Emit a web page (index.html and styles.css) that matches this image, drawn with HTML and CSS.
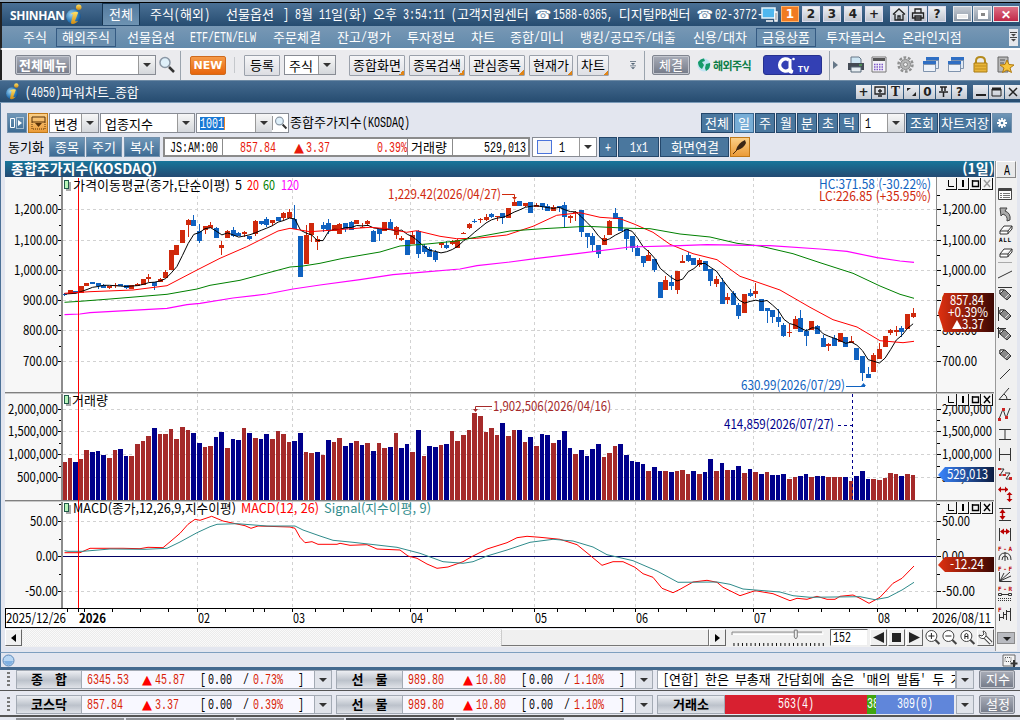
FILE: index.html
```html
<!DOCTYPE html>
<html lang="ko">
<head>
    <meta charset="UTF-8">
    <meta name="viewport" content="width=device-width, initial-scale=1.0">
    <title>(4050)파워차트_종합</title>
    <link rel="stylesheet" href="styles.css">
</head>
<body>
<svg class="defs" width="0" height="0">
    <defs>
        <linearGradient id="gold" x1="0" y1="0" x2="0" y2="1"><stop offset="0" stop-color="#ffe36a"/><stop offset="1" stop-color="#d08a10"/></linearGradient>
        <radialGradient id="ball" cx=".35" cy=".35" r=".8"><stop offset="0" stop-color="#9fd4f2"/><stop offset=".6" stop-color="#2a78b8"/><stop offset="1" stop-color="#0d3c74"/></radialGradient>
    </defs>
    <symbol id="logo" viewBox="0 0 16 20">
        <ellipse cx="7.500" cy="12" rx="7" ry="7" fill="url(#ball)"/>
        <path d="M5 9c3-2 6-2 7-1l-3 8c0 1 1 1 3 0-2 3-6 4-7 2l2-8z" fill="url(#gold)"/>
        <circle cx="12.500" cy="3" r="2.600" fill="url(#gold)"/>
    </symbol>
    <symbol id="glass" viewBox="0 0 18 18">
        <path d="M11 11l5 5" stroke="#333" stroke-width="2.500"/>
        <circle cx="7" cy="6.500" r="5" fill="#dff0fa" stroke="#8a97a5" stroke-width="1.500"/>
    </symbol>
    <symbol id="window" viewBox="0 0 18 18">
        <path d="M4 1h13v4H4z" fill="#2f6fc4"/><path d="M4.500 4.500h12v8h-12z" fill="#dfe9f5" stroke="#7f93ad"/>
        <path d="M1 5h13v4H1z" fill="#2f6fc4"/><path d="M1.500 8.500h12v7h-12z" fill="#eef2f8" stroke="#7f93ad"/>
    </symbol>
    <symbol id="pencil" viewBox="0 0 20 20">
        <path d="M5 6l5 0 6 6-4 4-7-6z" fill="#8a8a8a" stroke="#333"/><path d="M5 6v4l4-4z" fill="#fff" stroke="#333"/><path d="M14 10l-4 4" stroke="#ddd"/>
    </symbol>
    <symbol id="eraser" viewBox="0 0 20 12">
        <path d="M5 7l4-5h8l-4 5zM5 7v3h7.500l4.500-5V2M13 7v3" fill="#fff" stroke="#333"/>
    </symbol>
</svg>

<div class="app">
    <div class="strip"></div>

    <div class="titlebar">
        <b class="brand">SHINHAN</b>
        <svg class="brand-i" width="18" height="21"><use href="#logo"/></svg>
        <span class="tab f">전체</span>
        <span class="f">주식(해외)</span>
        <span class="f">선물옵션</span>
        <span class="f">] 8월 11일(화) 오후 3:54:11 (고객지원센터 ☎ 1588-0365, 디지털PB센터 ☎ 02-3772-</span>
        <svg width="17" height="15" viewBox="0 0 17 15"><path d="M1 1h13v10H1z" fill="#4fb7ee" stroke="#e8f4fb" stroke-width="1.500"/><path d="M5 14h7M14 5h2v9h-2z" stroke="#fff" stroke-width="1.500"/></svg>
        <b class="key on">1</b><b class="key">2</b><b class="key">3</b><b class="key">4</b><b class="key">+</b>
        <span class="key"><svg width="14" height="13" viewBox="0 0 14 13"><path d="M1 6.500L7 1l6 5.500M3 6v6h8V6M6 12V8h2v4" fill="none" stroke="#222" stroke-width="1.300"/></svg></span>
        <span class="key"><svg width="14" height="13" viewBox="0 0 14 13"><path d="M4 5V1h6v4M1.500 5h11v5h-11zM4 8h6v4H4z" fill="none" stroke="#222" stroke-width="1.300"/></svg></span>
        <b class="key">?</b>
        <span class="win"><i class="min"></i></span><span class="win"><i class="max"></i></span><b class="win close">✕</b>
    </div>

    <div class="menubar">
        <span class="f">주식</span>
        <span class="f boxed">해외주식</span>
        <span class="f">선물옵션</span>
        <span class="f">ETF/ETN/ELW</span>
        <span class="f">주문체결</span>
        <span class="f">잔고/평가</span>
        <span class="f">투자정보</span>
        <span class="f">차트</span>
        <span class="f">종합/미니</span>
        <span class="f">뱅킹/공모주/대출</span>
        <span class="f">신용/대차</span>
        <span class="f boxed">금융상품</span>
        <span class="f">투자플러스</span>
        <span class="f">온라인지점</span>
        <span class="more"><svg width="7" height="10" viewBox="0 0 7 10"><path d="M0 0h7v1H0zM1 2h5L3.500 4.500zM0 5h7v1H0zM1 7h5L3.500 9.500z" fill="#444"/></svg></span>
    </div>

    <div class="toolbar">
        <b class="dark f">전체메뉴</b>
        <div class="sel w-search"><i></i></div>
        <svg width="18" height="18"><use href="#glass"/></svg>
        <span class="vline"></span>
        <b class="new">NEW</b>
        <span class="vline short"></span>
        <span class="btn f">등록</span>
        <div class="sel w-stock"><span class="f">주식</span><i></i></div>
        <span class="btn fold f">종합화면</span>
        <span class="btn fold f">종목검색</span>
        <span class="btn fold f">관심종목</span>
        <span class="btn fold f">현재가</span>
        <span class="btn fold f">차트</span>
        <svg width="6" height="9" viewBox="0 0 7 10"><path d="M0 0h7v1H0zM1 2h5L3.500 4.500zM0 5h7v1H0zM1 7h5L3.500 9.500z" fill="#567"/></svg>
        <span class="vline"></span>
        <span class="dark f">체결</span>
        <span class="global"><svg width="14" height="14" viewBox="0 0 14 14"><circle cx="7" cy="7" r="6.500" fill="#bfe3f2"/><path d="M1 4q3-4 6-3.500l1 2.500-3 1 2 3-2 4Q1 9 1 4zM9 6l4-1q1 5-4 8l-1-3z" fill="#159a6a"/></svg><b>해외주식</b></span>
        <span class="tv"><svg width="22" height="17" viewBox="0 0 22 17"><path d="M13 3a6 6 0 1 0 0 10q1 2 3 2" fill="none" stroke="#fff" stroke-width="3.500"/><path d="M14 2v9q0 3 3 4" fill="none" stroke="#fff" stroke-width="3"/><circle cx="17.500" cy="2" r="1.300" fill="#fff"/></svg><b>TV</b></span>
        <span class="vline"></span>
        <svg width="5" height="8" viewBox="0 0 5 8"><path d="M0 0l5 4-5 4z" fill="#678"/></svg>
        <svg width="18" height="18" viewBox="0 0 18 18"><path d="M4 7V1h8l2 2v4" fill="#cfe6f3" stroke="#678"/><path d="M1 7h16v7H1z" fill="#444b55"/><path d="M4 11h10v5H4z" fill="#e8eef2" stroke="#567"/><path d="M12 9h3" stroke="#5c5"/></svg>
        <svg width="17" height="18" viewBox="0 0 17 18"><path d="M1 1h14v15H1z" fill="#f3f1f7" stroke="#777"/><path d="M2 2h12v3H2z" fill="#555"/><path d="M3 8.500h10M3 11h10M3 13.500h10" stroke="#7d57c8" stroke-width="1.500" stroke-dasharray="1.500 1"/></svg>
        <svg width="18" height="18" viewBox="0 0 18 18"><circle cx="8.500" cy="8.500" r="7" fill="none" stroke="#8f9090" stroke-width="2.500" stroke-dasharray="2.700 1.700"/><circle cx="8.500" cy="8.500" r="5" fill="#b5b6b6" stroke="#888"/><circle cx="8.500" cy="8.500" r="2" fill="#eee" stroke="#888"/></svg>
        <svg width="18" height="18"><use href="#window"/></svg>
        <svg width="18" height="18"><use href="#window"/></svg>
        <svg width="17" height="18" viewBox="0 0 17 18"><path d="M4 8V5q0-4 4.500-4T13 5v3" fill="none" stroke="#b58b1c" stroke-width="2"/><path d="M2 7h13v9H2z" fill="#e8b53a" stroke="#a87a12"/><path d="M3 10h11M3 13h11" stroke="#c08d1c"/></svg>
        <svg width="19" height="18" viewBox="0 0 19 18"><path d="M2 1h10v15H2z" fill="#b9b9b9" stroke="#666"/><path d="M4 4h5M4 7h4" stroke="#555"/><path d="M11 4l2 4.500 5 .5-4 3 1.500 4.500-4.500-2.500-4.500 2.500L8 12 4 9l5-.5z" fill="#f8c43a" stroke="#b07a10"/></svg>
    </div>

    <div class="childbar">
        <svg width="15" height="17"><use href="#logo"/></svg>
        <span class="f">(4050)파워차트_종합</span>
        <b class="mini">+</b>
        <span class="mini"><svg width="12" height="11" viewBox="0 0 12 11"><path d="M1 1h10v7H1zM4 10h4M6 3v4M4 5h4" fill="none" stroke="#222" stroke-width="1.300"/></svg></span>
        <b class="mini serif">T</b>
        <span class="mini"><svg width="11" height="10" viewBox="0 0 11 10"><path d="M1 1h4L1 4zM10 9H6l4-4z" fill="#222"/></svg></span>
        <b class="mini">0</b>
        <span class="mini"><svg width="9" height="11" viewBox="0 0 9 11"><path d="M1 1h7M3 1v4M6 1v4M0 6h9M4.500 6v5" stroke="#222" stroke-width="1.500"/></svg></span>
        <b class="mini">?</b>
        <span class="mini"><svg width="10" height="10"><path d="M0 8h10" stroke="#222" stroke-width="2"/></svg></span>
        <span class="mini"><svg width="11" height="10"><path d="M1 2h9v7H1z" fill="none" stroke="#222"/><path d="M1 2h9" stroke="#222" stroke-width="3"/></svg></span>
        <span class="mini"><svg width="10" height="10"><path d="M1 1l8 8M9 1l-8 8" stroke="#222" stroke-width="1.500"/></svg></span>
    </div>

    <div class="content">
        <div class="row1">
            <span class="blue light sq"><svg width="16" height="14" viewBox="0 0 16 14"><path d="M1.500 2.500h4v9h-4z" fill="none" stroke="#fff"/><path d="M7.500 1.500h7v11h-7z" fill="none" stroke="#fff" stroke-dasharray="1 1"/><path d="M9 4l4 3-4 3z" fill="#fff"/></svg></span>
            <span class="orange sq"><svg width="15" height="14" viewBox="0 0 15 14"><path d="M1 1h13v5H1z" fill="none" stroke="#5a3208"/><path d="M1 6v7h13V6" fill="none" stroke="#5a3208" stroke-dasharray="1 1"/><path d="M4 7h7l-3.500 4z" fill="#5a3208"/></svg></span>
            <div class="sel w-change"><span class="f">변경</span><i></i></div>
            <div class="sel w-type"><span class="f">업종지수</span><i></i></div>
            <div class="sel w-code"><span class="f marked">1001</span><i></i><svg class="find" width="14" height="14"><use href="#glass"/></svg></div>
            <span class="f label">종합주가지수(KOSDAQ)</span>
            <span class="blue f">전체</span>
            <span class="blue f active">일</span>
            <span class="blue f">주</span>
            <span class="blue f">월</span>
            <span class="blue f">분</span>
            <span class="blue f">초</span>
            <span class="blue f">틱</span>
            <div class="sel w-one"><span class="f">1</span><i></i></div>
            <span class="blue f">조회</span>
            <span class="blue f">차트저장</span>
            <span class="blue light sq"><svg width="12" height="12" viewBox="-6 -6 12 12"><path d="M-5 0H5M0-5V5M-3.500-3.500l7 7M3.500-3.500l-7 7" stroke="#fff" stroke-width="1.800"/><circle r="3" fill="#fff"/><circle r="1.300" fill="#4a779e"/></svg></span>
        </div>

        <div class="row2">
            <span class="f label">동기화</span>
            <span class="blue light f">종목</span>
            <span class="blue light f">주기</span>
            <span class="blue light f">복사</span>
            <div class="quote">
                <span class="f">JS:AM:00</span>
                <span class="nums"><span class="f">857.84</span><span class="f">▲3.37</span><span class="f">0.39%</span></span>
                <span class="f">거래량</span>
                <span class="f right">529,013</span>
            </div>
            <div class="sel w-layout"><em></em><span class="f">1</span><i></i></div>
            <span class="blue f">+</span>
            <span class="blue f">1x1</span>
            <span class="blue f">화면연결</span>
            <span class="orange sq"><svg width="16" height="16" viewBox="0 0 16 16"><path d="M1 15L8 8" stroke="#532c08"/><path d="M4 11q2-7 9-10l1 3q-2 5-8 7z" fill="#3c2715"/></svg></span>
        </div>

        <div class="work">
            <div class="charts">
                <div class="charthead"><b>종합주가지수(KOSDAQ)</b><b>(1일)</b></div>
                <svg id="chart" width="990" height="451" viewBox="5 177 990 451"></svg>
                <div class="scroll">
                    <span class="sbtn"><svg width="5" height="8"><path d="M5 0v8L0 4z"/></svg></span>
                    <div class="track"><div class="thumb"></div></div>
                    <span class="sbtn"><svg width="5" height="8"><path d="M0 0v8l5-4z"/></svg></span>
                    <svg class="slider" width="96" height="18" viewBox="0 0 96 18"><path d="M1 6V3h91" fill="none" stroke="#888"/><path d="M2 5.500h91V3" fill="none" stroke="#fff"/><path d="M2.500 15.500h94" stroke="#111" stroke-width="3" stroke-dasharray="1 3.300"/><path d="M64 1h3v7l-1.500 2-1.500-2z" fill="#eee" stroke="#777"/></svg>
                    <span class="count f">152</span>
                    <span class="sbtn"><svg width="11" height="11"><path d="M11 0v11L0 5.500z" fill="#222"/></svg></span>
                    <span class="sbtn"><svg width="11" height="11"><path d="M1 1h9v9H1z" fill="#222"/></svg></span>
                    <span class="sbtn"><svg width="11" height="11"><path d="M0 0v11l11-5.500z" fill="#222"/></svg></span>
                    <svg class="zoom" width="17" height="17" viewBox="0 0 17 17"><circle cx="7" cy="7" r="5.500" fill="#fff" stroke="#444"/><path d="M11 11l4 4" stroke="#444" stroke-width="2"/><path d="M4 7h6M7 4v6" stroke="#222"/></svg>
                    <svg class="zoom" width="17" height="17" viewBox="0 0 17 17"><circle cx="7" cy="7" r="5.500" fill="#fff" stroke="#444"/><path d="M11 11l4 4" stroke="#444" stroke-width="2"/><path d="M4 7h6" stroke="#222"/></svg>
                    <svg class="zoom" width="17" height="17" viewBox="0 0 17 17"><circle cx="7" cy="7" r="5.500" fill="#fff" stroke="#444"/><path d="M11 11l4 4" stroke="#444" stroke-width="2"/><path d="M5.500 10V5.500l1.500-1 1.500 1V10M5.500 7.500h3" fill="none" stroke="#222"/></svg>
                    <span class="sbtn"><svg width="15" height="15" viewBox="0 0 15 15"><path d="M7 7l6 6" stroke="#444" stroke-width="4"/><path d="M7 7l6 6" stroke="#fff" stroke-width="2"/><path d="M5 1l1 3-2 2-3-1q0 4 5 3.500Q9 6 8 3 7 1 5 1z" fill="#fff" stroke="#444"/></svg></span>
                </div>
            </div>

            <div class="tools">
                <span class="f abtn">A</span>
                <svg viewBox="0 0 20 20"><path d="M3.500 4.500h13v11h-13z" fill="#fff" stroke="#444"/><path d="M4 6h12" stroke="#444" stroke-width="2"/><path d="M5 9.500h10M5 11.500h10M5 13.500h10" stroke="#777" stroke-dasharray="2 1 7 0"/></svg>
                <svg viewBox="0 0 20 20"><path d="M5 4h7l-2 3q6 2 5 9l-3 1q1-5-4-7l-2 2z" fill="#aaa" stroke="#444"/></svg>
                <svg viewBox="0 0 20 20"><svg x="0" y="0" width="20" height="12"><use href="#eraser"/></svg><text x="4" y="18" class="tiny" textLength="12">ALL</text></svg>
                <svg viewBox="0 0 20 20"><svg x="0" y="3" width="20" height="12"><use href="#eraser"/></svg><path d="M3 18.500h14" stroke="#aaa"/></svg>
                <svg viewBox="0 0 20 20"><path d="M3 14l14-7" stroke="#333"/></svg>
                <svg viewBox="0 0 20 20"><path d="M3 3.500h14" stroke="#333"/><use href="#pencil"/></svg>
                <svg viewBox="0 0 20 20"><path d="M3.500 3v14" stroke="#333"/><use href="#pencil"/></svg>
                <svg viewBox="0 0 20 20"><path d="M2 4.500h9M3.500 3v11" stroke="#333"/><use href="#pencil"/></svg>
                <svg viewBox="0 0 20 20"><use href="#pencil"/></svg>
                <svg viewBox="0 0 20 20"><path d="M5 15L15 5" stroke="#333"/></svg>
                <svg viewBox="0 0 20 20"><path d="M14 4L4 15.500h12M9 10q3 2 3 5" fill="none" stroke="#333"/></svg>
                <svg viewBox="0 0 20 20"><path d="M4 15L8 5l3 9 4-10" fill="none" stroke="#333"/><path d="M3 14h3v3H3zM7 4h3v3H7zM10 12h3v3h-3z" fill="#c22"/></svg>
                <svg viewBox="0 0 20 20"><path d="M4 5.500h12M4 15.500h12M10 5v10" stroke="#333"/></svg>
                <svg viewBox="0 0 20 20"><path d="M4.500 4v13M15.500 4v13M4 10.500h12" stroke="#333"/></svg>
                <svg viewBox="0 0 20 20"><path d="M4 5h5L5 11h5M10 9h5l-4 6h5" fill="none" stroke="#333"/><path d="M3 4h3v2H3zM8 10h3v2H8zM14 13h3v3h-3zM6 10h-2v2h2z" fill="#c22"/></svg>
                <svg viewBox="0 0 20 20"><path d="M4 5.500h9M14.500 10v6" stroke="#b00" stroke-width="1.500"/><path d="M3 5.500l3-3v6zM13 5.500l-3-3v6zM14.500 8l3 3h-6zM14.500 18l3-3h-6z" fill="#b00"/></svg>
                <svg viewBox="0 0 20 20"><path d="M4 4.500h12M4 16.500h12" stroke="#333"/><path d="M7.500 7v7" stroke="#b00" stroke-width="1.500"/><path d="M7.500 5l3 4h-6zM7.500 16l3-4h-6z" fill="#b00"/></svg>
                <svg viewBox="0 0 20 20"><path d="M4.500 4v13M15.500 4v13" stroke="#333"/><path d="M6 7.500h8" stroke="#b00" stroke-width="1.500"/><path d="M5 7.500l4-3v6zM15 7.500l-4-3v6z" fill="#b00"/></svg>
                <svg viewBox="0 0 20 20"><text x="3" y="7" class="tiny red" textLength="14">F-A</text><path d="M4 16q0-7 6-7t6 7M7 16q0-4 3-4t3 4M10 8v9" fill="none" stroke="#333"/></svg>
                <svg viewBox="0 0 20 20"><text x="3" y="7" class="tiny red" textLength="14">F-F</text><path d="M4.500 8v9.500h12M5 17L15 8M5 17l11-5M5 17l4-8" fill="none" stroke="#333"/></svg>
                <svg viewBox="0 0 20 20"><text x="3" y="7" class="tiny red" textLength="14">F-R</text><path d="M3.500 9.500h3v2h-3zM13.500 9.500h3v2h-3zM7 10.500h6" fill="none" stroke="#333"/><path d="M3 14.500h14M3 16.500h14" stroke="#333" stroke-dasharray="1 1"/></svg>
                <svg viewBox="0 0 20 20"><text x="3" y="8" class="tiny red">F</text><path d="M4.500 10v7M8.500 8v7M11.500 6v10M15.500 4v13M5 13.500h3M9 10.500h3M12 7.500h3" stroke="#333"/></svg>
                <span class="down"></span>
            </div>
        </div>
    </div>

    <div class="dock">
        <svg width="13" height="13"><circle cx="6.500" cy="6.500" r="5.500" fill="#b8d6f3" stroke="#5c87b8"/><path d="M2 7h9q-1 4-4.500 4T2 7z" fill="#7fb0e2"/></svg>
        <svg width="16" height="14" viewBox="0 0 16 14"><path d="M1 1h12v11H1z" fill="#f4f4f4" stroke="#666"/><path d="M3 3.500h6v4H3z" fill="none" stroke="#555" stroke-dasharray="1 1"/><path d="M12 6v7M8.500 9.500h7" stroke="#333" stroke-width="2"/></svg>
    </div>

    <div class="ticker">
        <span class="grip"></span>
        <b class="name f">종  합</b>
        <div class="vals"><span class="f">6345.53</span><span class="f up">▲</span><span class="f">45.87</span><span class="f k">[</span><span class="f k">0.00</span><span class="f k">/</span><span class="f">0.73%</span><span class="f k">]</span></div>
        <i class="dd"></i>
        <b class="name f">선  물</b>
        <div class="vals"><span class="f">989.80</span><span class="f up">▲</span><span class="f">10.80</span><span class="f k">[</span><span class="f k">0.00</span><span class="f k">/</span><span class="f">1.10%</span><span class="f k">]</span></div>
        <i class="dd"></i>
        <div class="news f">[연합] 한은 부총재 간담회에 숨은 '매의 발톱' 두 가지</div>
        <i class="dd"></i>
        <span class="dark f">지수</span>
    </div>
    <div class="ticker second">
        <span class="grip"></span>
        <b class="name f">코스닥</b>
        <div class="vals"><span class="f">857.84</span><span class="f up">▲</span><span class="f">3.37</span><span class="f k">[</span><span class="f k">0.00</span><span class="f k">/</span><span class="f">0.39%</span><span class="f k">]</span></div>
        <i class="dd"></i>
        <b class="name f">선  물</b>
        <div class="vals"><span class="f">989.80</span><span class="f up">▲</span><span class="f">10.80</span><span class="f k">[</span><span class="f k">0.00</span><span class="f k">/</span><span class="f">1.10%</span><span class="f k">]</span></div>
        <i class="dd"></i>
        <div class="ratio"><b class="name f">거래소</b><span class="f rise">563(4)</span><span class="f flat">38</span><span class="f fall">309(0)</span></div>
        <i class="dd"></i>
        <span class="dark f">설정</span>
    </div>
    <div class="tabs"><i></i><i></i><i></i><i class="cur"></i><i></i></div>
</div>
<script src="chart.js"></script>
</body>
</html>
```

FILE: styles.css
```css
* {
    box-sizing: border-box;
}
body {
    margin: 0;
    width: 1020px;
    height: 720px;
    overflow: hidden;
    font-family: "Noto Sans CJK KR", sans-serif;
    font-size: 13px;
    line-height: 18px;
    color: #000;
    background: #e3e6ef;
}
svg {
    display: block;
}
.defs {
    position: absolute;
}
.app {
    display: flex;
    flex-direction: column;
    height: 720px;
}
/* fixed pitch text: 12px hangul, 6px ascii */
.f {
    white-space: pre;
}
.f .a {
    display: inline-block;
    font-family: "Liberation Mono", monospace;
    font-size: 15px;
    line-height: 14px;
    transform: scaleX(.667);
    transform-origin: left;
}
.f .s {
    display: inline-block;
    width: 12px;
    line-height: 14px;
    font-family: "DejaVu Sans", sans-serif;
    font-size: 13px;
}
.strip {
    flex: none;
    height: 3px;
    background: #91a5b8;
    border-bottom: 1px solid #000;
}

/* main window */
.titlebar, .menubar, .toolbar, .childbar, .row1, .row2 {
    display: grid;
    align-items: center;
    justify-items: start;
    flex: none;
}
.titlebar {
    height: 23px;
    padding: 0 0 1px 8px;
    grid-template-columns: 55px 37px 48px 76px 57px 478px 20px 21px 21px 21px 21px 25px 19px 19px 25px 20px 20px 27px;
    background: linear-gradient(#4a7095, #264c70);
    color: #fff;
    border-left: 2px solid #222;
}
.brand {
    font-family: "Open Sans", sans-serif;
    font-size: 12px;
    letter-spacing: -.3px;
    margin-top: 3px;
}
.tab {
    height: 22px;
    padding: 0 6px;
    line-height: 20px;
    background: linear-gradient(#547b9f, #6e93b2);
    border: 1px solid #163451;
    border-bottom: 0;
}
.key {
    width: 18px;
    height: 16px;
    display: flex;
    align-items: center;
    justify-content: center;
    font: bold 12px "DejaVu Sans", sans-serif;
    color: #222;
    background: linear-gradient(#eef0f3, #bfc5cf);
    border: 1px solid #dde;
}
.key.on {
    color: #fff;
    background: #f07b22;
    border-color: #ffb36b;
}
.win {
    width: 19px;
    height: 16px;
    display: flex;
    align-items: center;
    justify-content: center;
    background: linear-gradient(#c5cbd3, #8c97a5);
    border: 1px solid #e4e8ec;
}
.win i {
    width: 11px;
    height: 5px;
    border: 1px solid #fff;
    background: #eee;
}
.win .min {
    margin-top: 5px;
}
.win .max {
    width: 10px;
    height: 9px;
    border: 3px solid #fff;
    background: #888;
}
.win.close {
    width: 26px;
    color: #fff;
    font-size: 12px;
    background: linear-gradient(#dd6f84, #c02848);
}
.menubar {
    height: 23px;
    padding-left: 21px;
    grid-template-columns: 33px 71px 63px 83px 64px 70px 64px 39px 70px 113px 63px 70px 76px 107px 10px;
    background: linear-gradient(#7898b5, #628aab);
    border-left: 2px solid #222;
    border-bottom: 1px solid #fff;
    color: #fff;
}
.menubar .f {
    height: 18px;
}
.menubar .boxed {
    height: 19px;
    padding: 0 5px;
    line-height: 16px;
    border: 1px solid #345a82;
    background: #6b8fae;
}
.more {
    height: 17px;
    width: 9px;
    padding: 3px 1px;
    background: #e4e7ec;
}
.toolbar {
    height: 31px;
    padding-left: 13px;
    grid-template-columns: 61px 82px 22px 10px 44px 10px 40px 65px 60px 60px 60px 48px 53px 14px 8px 45px 66px 66px 4px 14px 24px 26px 25px 25px 25px 24px 24px;
    background: #ebebee;
    border-left: 2px solid #222;
    border-top: 1px solid #fff;
}
.dark {
    height: 20px;
    padding: 0 3px;
    line-height: 17px;
    color: #fff;
    background: linear-gradient(#a9adb8, #747a88);
    border: 1px solid #808590;
    border-radius: 2px;
    box-shadow: inset 0 0 0 1px #c3c6ce;
}
span.dark {
    padding: 0 6px;
    font-weight: normal;
}
.new {
    width: 36px;
    height: 19px;
    font: bold 11px/18px "DejaVu Sans", sans-serif;
    text-align: center;
    color: #fff;
    background: linear-gradient(#f59a48, #e8650b);
    border: 1px solid #cf6a1c;
    border-radius: 2px;
}
.vline {
    width: 1px;
    height: 29px;
    background: #9aa3ad;
}
.vline.short {
    height: 16px;
    background: #c5c8cc;
}
.btn {
    height: 21px;
    padding: 0 5px;
    line-height: 18px;
    border: 1px solid #9ba1ab;
    border-radius: 1px;
    background: linear-gradient(#f6f6f8, #dcdde2);
}
.btn.fold {
    padding: 0 3px;
    background: linear-gradient(135deg, transparent 50%, #e08416 50%) right bottom / 5px 5px no-repeat, linear-gradient(#f6f6f8, #dedfe4);
}
.sel {
    height: 20px;
    display: flex;
    align-items: center;
    background: #fff;
    border: 1px solid #888c94;
    padding-left: 4px;
    line-height: 17px;
}
.sel i, .dd {
    width: 17px;
    height: 18px;
    margin-left: auto;
    display: flex;
    align-items: center;
    justify-content: center;
    background: linear-gradient(#f7f7f7, #d4d7db);
    border-left: 1px solid #999;
}
.sel i::after, .dd::after {
    content: "";
    border: 4px solid transparent;
    border-top-color: #333;
    border-bottom: 0;
}
.w-search {
    width: 80px;
}
.w-stock {
    width: 52px;
}
.w-change {
    width: 50px;
}
.w-type {
    width: 95px;
}
.w-code {
    width: 93px;
    padding-left: 3px;
}
.w-one {
    width: 45px;
}
.w-layout {
    width: 65px;
}
.w-layout em {
    width: 15px;
    height: 14px;
    border: 1px solid #4a74dc;
    background: #eef0f5;
    margin-right: 7px;
}
.w-layout i {
    background: #fff;
}
.marked {
    height: 13px;
    line-height: 12px;
    color: #fff;
    background: #1878d4;
    border-right: 1px solid #e8822a;
}
.marked .a {
    line-height: 12px;
}
.find {
    width: 16px;
    border-left: 1px solid #999;
    padding-left: 1px;
}
.global {
    display: flex;
    align-items: center;
    gap: 2px;
    color: #0d7d46;
    font-size: 11px;
    letter-spacing: -.6px;
}
.tv {
    display: flex;
    align-items: center;
    justify-content: center;
    width: 59px;
    height: 20px;
    border-radius: 3px;
    color: #fff;
    background: #3340b4;
    border: 1px solid #26318f;
}
.tv b {
    font: bold 8px "Inter", sans-serif;
    margin-top: 8px;
}

/* chart window */
.childbar {
    height: 23px;
    padding-left: 5px;
    grid-template-columns: 20px 831px 16px 16px 16px 16px 16px 16px 21px 16px 16px 15px;
    color: #fff;
    background: linear-gradient(#456b90, #264c70);
    border-top: 1px solid #6d8aa5;
    border-bottom: 1px solid #7a9ab8;
}
.mini {
    width: 15px;
    height: 14px;
    display: flex;
    align-items: center;
    justify-content: center;
    font: bold 12px "DejaVu Sans", sans-serif;
    color: #222;
    background: linear-gradient(#eceef2, #c3c9d2);
}
.mini.serif {
    font-family: "DejaVu Serif", serif;
}
.content {
    flex: none;
    height: 549px;
    padding: 10px 0 0 5px;
    border-left: 1px solid #4c7197;
}
.row1 {
    height: 20px;
    padding-left: 1px;
    grid-template-columns: 21px 21px 51px 96px 94px 411px 33px 21px 21px 21px 21px 21px 21px 46px 33px 53px 20px;
}
.row2 {
    height: 20px;
    margin-top: 4px;
    padding-left: 2px;
    grid-template-columns: 41px 37px 38px 39px 369px 67px 19px 42px 70px 20px;
}
.label {
    line-height: 17px;
    margin-top: -2px;
}
.blue {
    height: 20px;
    padding: 0 3px;
    line-height: 17px;
    color: #fff;
    background: #4a779e;
    border: 1px solid #24476b;
}
.row1 .blue {
    min-width: 20px;
    padding: 0 3px;
}
.row1 .blue:nth-child(7), .row1 .blue:nth-child(15) {
    width: 32px;
}
.row1 .blue:nth-child(16) {
    padding: 0 1px;
    width: 52px;
}
.blue.light {
    width: 36px;
    padding: 0 5px;
    background: linear-gradient(#6f96b7, #3e6c94);
    border-color: #7391ad;
}
.blue.active {
    background: #78add6;
    border-color: #3a6790;
}
.row2 .blue:nth-child(7) {
    width: 18px;
    padding: 0 5px;
}
.row2 .blue:nth-child(8) {
    width: 41px;
    padding: 0 11px;
}
.row2 .blue:nth-child(9) {
    width: 69px;
    padding: 0 10px;
}
.sq, .row1 .blue.sq {
    width: 20px;
    height: 20px;
    padding: 0;
    display: flex;
    align-items: center;
    justify-content: center;
}
.orange {
    background: linear-gradient(#fbcf86, #eb9b38);
    border: 1px solid #c07818;
}
.quote {
    width: 367px;
    height: 20px;
    display: grid;
    grid-template-columns: 58px 185px 45px 1fr;
    line-height: 15px;
    background: #fff;
    border: 2px solid #8b8b8b;
}
.quote > span {
    height: 16px;
    border-right: 1px solid #8b8b8b;
    padding-left: 5px;
}
.quote > span:nth-child(3) {
    padding-left: 3px;
}
.quote .nums {
    display: grid;
    grid-template-columns: 54px 83px 30px;
    padding-left: 17px;
    color: #e8190c;
}
.quote .right {
    border: 0;
    text-align: right;
    padding-right: 2px;
}
.work {
    display: flex;
    margin-top: 4px;
    margin-left: -1px;
}
.charts {
    width: 990px;
}
.charthead {
    height: 16px;
    width: 989px;
    display: flex;
    justify-content: space-between;
    padding: 0 0 0 6px;
    line-height: 15px;
    font-size: 14px;
    color: #fff;
    background: linear-gradient(#17769a, #244a72);
}
.scroll {
    display: flex;
    height: 18px;
    margin-top: 1px;
    background: #f0f0f0;
}
.sbtn {
    width: 17px;
    height: 17px;
    flex: none;
    display: flex;
    align-items: center;
    justify-content: center;
    background: #f0f0f0;
    border: 1px solid;
    border-color: #fff #666 #666 #fff;
    margin-right: 1px;
}
.track {
    width: 686px;
    height: 17px;
    background: repeating-conic-gradient(#ebebeb 0 25%, #fafafa 0 50%) 0 0 / 2px 2px;
}
.thumb {
    width: 208px;
    height: 17px;
    margin-left: 478px;
    background: #f0f0f0;
    border: 1px solid;
    border-color: #fff #777 #777 #ccc;
}
.slider {
    margin: 0 4px;
}
.count {
    width: 38px;
    height: 17px;
    margin-right: 2px;
    padding-left: 2px;
    line-height: 14px;
    background: #fff;
    border: 1px solid;
    border-color: #666 #eee #eee #666;
}
.zoom {
    width: 18px;
}
.tools {
    width: 22px;
    height: 490px;
    background: #f0f0f0;
    border-left: 1px solid #999;
}
.tools > svg {
    width: 20px;
    height: 20px;
    margin-left: -1px;
}
.abtn {
    display: block;
    width: 20px;
    height: 17px;
    margin-bottom: 6px;
    padding-left: 7px;
    line-height: 15px;
    background: #e9e9e9;
    border: 1px solid;
    border-color: #fff #888 #888 #fff;
}
.tiny {
    font: bold 6px "DejaVu Sans Mono", monospace;
}
.red {
    fill: #b00;
}
.down {
    display: block;
    width: 18px;
    height: 12px;
    margin: 8px 0 0 1px;
    padding: 4px 5px;
    background: #b9bbc0;
    border: 1px solid #8a8a8a;
}
.down::after {
    content: "";
    display: block;
    width: 0;
    border: 4px solid transparent;
    border-top-color: #222;
    border-bottom: 0;
}

/* bottom bars */
.dock {
    flex: none;
    display: flex;
    justify-content: space-between;
    height: 18px;
    padding: 1px 2px 0 1px;
    border-top: 1px solid #7e9fbf;
    border-bottom: 3px solid #43698f;
    border-left: 1px solid #4c7197;
}
.ticker {
    flex: none;
    display: grid;
    grid-template-columns: 10px 66px 232px 22px 67px 232px 22px 299px 23px 36px;
    height: 21px;
    padding: 0 0 2px 6px;
    background: #e7e9f1;
    border-bottom: 1px solid #555;
    line-height: 15px;
}
.ticker.second {
    height: 26px;
    padding: 4px 0 3px 6px;
    border-bottom: 2px solid #555;
}
.grip {
    width: 3px;
    height: 15px;
    margin: 2px 0 0 1px;
    background: repeating-linear-gradient(#777 0 2px, transparent 2px 4px);
}
.name {
    text-align: center;
    background: linear-gradient(#eceef2, #bcc2cb 55%, #dfe2e8);
    border: 1px solid #a3aab4;
}
.vals {
    display: grid;
    grid-template-columns: 55px 13px 45px 8px 35px 10px 45px 10px;
    padding-left: 5px;
    color: #d81e06;
    background: #f8f8ff;
    border: 1px solid #a3aab4;
    border-width: 1px 0;
}
.vals .up {
    color: #f00;
}
.vals .k {
    color: #000;
}
.ticker .dd {
    width: 18px;
    height: auto;
    margin: 0;
    border: 1px solid #a3aab4;
    background: #e0e3ea;
}
.ticker .dark {
    height: auto;
    line-height: 15px;
}
.news {
    overflow: hidden;
    padding-left: 5px;
    background: #fff;
    border: 1px solid #a3aab4;
}
.ratio {
    display: grid;
    grid-template-columns: 68px 142px 9px 78px;
    color: #fff;
    text-align: center;
}
.ratio .name {
    color: #000;
}
.rise {
    background: #d82030;
}
.flat {
    overflow: hidden;
    background: #3fa510;
    text-align: left;
}
.fall {
    background: #6086da;
}
.tabs {
    flex: 1;
    display: flex;
    gap: 2px;
    padding: 1px 0 0 16px;
}
.tabs i {
    width: 108px;
    height: 2px;
    background: #909398;
}
.tabs .cur {
    background: #44474d;
}

/* chart */
#chart text {
    font-size: 13px;
    white-space: pre;
}
#chart .bold {
    font-weight: bold;
}
```

FILE: chart.js
```js
// wrap ascii runs and symbols so that they keep the 6px / 12px pitch
document.querySelectorAll('.f').forEach(function (el) {
    el.innerHTML = el.textContent.replace(/[\x20-\x7e]+|[☎▲]/g, function (m) {
        if (m === '☎' || m === '▲') return '<span class="s">' + m + '</span>';
        return '<span class="a" style="margin-right:' + -3 * m.length + 'px">' + m + '</span>';
    });
});

var svg = document.getElementById('chart');
var out = [];
var BLUE = '#1062c0', RED = '#cf290c';

function rect(x, y, w, h, fill) {
    out.push('<rect x="' + x + '" y="' + y + '" width="' + w + '" height="' + h + '" fill="' + fill + '"/>');
}
function line(pts, color, extra) {
    out.push('<polyline points="' + pts + '" fill="none" stroke="' + color + '" ' + (extra || '') + '/>');
}
function text(x, y, s, w, color, cls) {
    out.push('<text x="' + x + '" y="' + y + '" textLength="' + w + '" lengthAdjust="spacingAndGlyphs" fill="' +
        (color || '#000') + '" class="' + (cls || '') + '">' + s + '</text>');
}
function barX(i) {
    return 64.5 + i * 5.62;
}

// panes
rect(5, 177, 990, 451, '#f7f7f7');
rect(63, 177, 874, 431, '#fff');

var months = [['02', 197.5], ['03', 292.5], ['04', 410.5], ['05', 534.5], ['06', 635.5], ['07', 753.5], ['08', 877.5]];
var DASH = 'stroke-dasharray="3 3" shape-rendering="crispEdges"';
months.forEach(function (m) {
    line(m[1] + ',178 ' + m[1] + ',608', '#d2d2d2', DASH);
});
var axes = [
    ['1,200.00', 209.5, 44], ['1,100.00', 240.5, 44], ['1,000.00', 270.5, 44], ['900.00', 300.5, 35], ['800.00', 330.5, 35], ['700.00', 361.5, 35],
    ['2,000,000', 409.5, 50], ['1,500,000', 431.5, 50], ['1,000,000', 454.5, 50], ['500,000', 477.5, 41],
    ['50.00', 521.5, 28], ['0.00', 556.5, 22], ['-50.00', 591.5, 33]
];
axes.forEach(function (a) {
    if (a[0] !== '0.00') line('63,' + a[1] + ' 937,' + a[1], '#d2d2d2', DASH);
    text(58 - a[2], a[1] + 4.5, a[0], a[2]);
    text(942, a[1] + 4.5, a[0], a[2]);
    line('58,' + a[1] + ' 62,' + a[1], '#000');
    line('937,' + a[1] + ' 941,' + a[1], '#000');
});
[195.5, 225.5, 255.5, 285.5, 315.5, 346.5, 420.5, 443.5, 466.5, 504.5, 539.5, 574.5].forEach(function (y) {
    line('59,' + y + ' 62,' + y, '#000');
    line('937,' + y + ' 940,' + y, '#000');
});

// colour, body top, body bottom, high, low; in thirds of a pixel below y 175
var candles = ('b356,360,353,362 r345,356 b348,355 r333,353 r324,333 b321,327 b324,333,324,341 b329,338,326,338 r333,339,333,342 r330,332,323,340 ' +
    'b328,333 b330,339,330,342 r330,341 r327,333,323,333 r312,329 r306,311,297,321 b320,333,320,345 r312,320,308,320 r291,309,285,309 r226,284 ' +
    'r210,239 r166,203 r136,150,132,186 b136,153,120,153 b168,198,147,204 r153,164,153,177 r150,160,141,160 b159,188,156,188 r210,218,198,240 r168,188,165,188 ' +
    'b165,183,156,186 b174,183,170,183 r171,176,168,185 b183,191,183,195 r138,177,134,182 b138,147,138,150 b132,149,126,155 r136,143,136,153 b126,137 r114,129,110,137 ' +
    'r111,129,102,129 b132,161,90,161 b183,305 r181,266,150,266 r144,179,144,200 r192,201,183,225 b150,162,141,171 b144,167,132,176 r150,167 r147,176,143,176 ' +
    'b144,161,144,171 b141,164,137,164 r135,147 r156,159,144,159 r138,146,134,153 b168,200,165,200 b162,177,162,198 r141,167 b141,164,132,164 r156,179,153,192 ' +
    'r189,194,183,198 b195,239 r180,206,168,206 b168,236,165,248 b213,231,207,236 b222,245,216,245 b231,254,225,261 r203,209,200,218 b210,218,198,221 r198,206,195,210 ' +
    'r195,218,192,218 r174,176,171,176 r147,158,144,162 b138,141,132,144 r132,135,129,143 r126,134,117,137 b117,126,114,129 r122,126,122,138 b114,129,114,147 r99,129 ' +
    'r80,93,75,93 b78,93 r84,93,84,96 b81,113 r90,95,84,95 b84,95,84,104 b93,107,87,107 r96,107,90,107 b93,98,93,110 b90,125,81,158 ' +
    'r123,128,120,143 r111,115,108,138 b105,171,105,185 b174,185,174,218 b183,209,174,228 b210,236,210,249 r189,209,180,209 r138,179,134,179 b114,131,99,131 b126,167 ' +
    'b162,191,162,224 b183,218,183,230 b218,242,210,242 b243,263,243,276 r240,258,225,258 b251,285,251,291 b321,369 r315,345,303,345 b321,332,300,345 r288,345,288,357 ' +
    'r258,263,240,263 b240,257,232,260 b249,269 r255,270,249,275 b257,288 b282,318,282,333 r312,326,303,336 b321,387,310,387 r366,375,354,387 b353,389,348,389 ' +
    'b390,422,384,432 r357,413 b354,362,342,366 r348,357,324,369 b372,408 b399,408,399,444 b405,425,405,443 b426,441,402,456 b450,483,444,485 r470,474,447,486 ' +
    'r432,461,423,461 b429,470,405,470 b468,482,462,512 r438,465 b453,476,450,476 b489,516,480,516 r507,512,504,527 b489,512,480,512 r474,500 b486,515 ' +
    'r497,504,484,504 b519,555 b542,594,542,618 b597,609,576,609 r540,591,534,591 r522,551,504,551 r483,516 r465,473,462,479 r465,470,453,483 b459,471,453,485 ' +
    'r417,461 r414,426,399,429').split(' ');
var close = [];
candles.forEach(function (c, i) {
    var v = c.slice(1).split(',').map(function (n) { return Math.round(175 + n / 3); });
    var color = c[0] === 'r' ? RED : BLUE;
    var x = Math.floor(barX(i));
    rect(x - 2, v[0], 5, Math.max(1, v[1] - v[0]), color);
    if (v.length > 2) rect(x, v[2], 1, v[3] - v[2], color);
    close.push(175 + c.slice(1).split(',')[c[0] === 'r' ? 0 : 1] / 3);
});

// moving averages
var ma5 = [[64.5, 294], [70, 293.7], [76, 293.3]];
for (var i = 4; i < close.length; i++) {
    var sum = 0;
    for (var j = 0; j < 5; j++) sum += close[i - j];
    ma5.push([barX(i).toFixed(1), (sum / 5).toFixed(1)]);
}
line(ma5.join(' '), '#000');
line('64.5,293.3 90,291.7 133,290 167,285.7 197,270 220,258.3 246.7,246.7 278,231 290,228.3 310,231.7 330,230.3 370,227.3 386.7,228.7 406.7,232.3 416.7,230.7 440,236.3 456.7,238.7 476.7,238.3 506.7,235 533,226.3 556.7,215.3 580,212.7 600,217.3 620,218.7 634,224 653,232.3 670,244.3 693,253.7 717,259.7 740,276.3 753,280.7 780,290 810,307.3 833,319.7 857,327 880,340.7 903,342.7 914,341.3', '#f00');
line('64.5,302.3 80,301.3 110,299 167,294.3 197,289 210,285.3 240,280.3 290,267 303,266 320,263.3 343,258.3 380,252 400,246 427,244 457,241 477,237 510,231 543,228.7 587,226.3 630,228.3 650,228.7 680,234 710,237 737,243.3 760,246 793,253.7 820,262.7 853,273.3 880,286 900,294.3 914,298.3', '#008000');
line('64.5,314.7 80,314 90,312.7 167,308.3 187,304.7 200,303.3 233,298 267,294 293,289 320,285 360,279.7 393,274.7 420,272.3 460,269 477,265.7 510,262 537,258.3 577,253.7 630,247 680,245.7 707,244.7 770,245.7 820,249 847,251.3 877,257.7 900,261 914,262.3', '#f0f', 'stroke-width="1.2"');

// volume, tops in thirds of a pixel below y 390
var volume = ('r216 r204 b216 r207 r180 b186 b183 b195 r204 r180 b177 b198 r198 r162 r153 r138 b114 r132 r132 r117 r147 r111 r120 b129 b159 r171 r168 b141 b126 r174 ' +
    'b147 b150 r114 b129 r144 b147 b132 r147 r123 r132 r156 b153 b129 r186 r189 b186 r195 b150 r156 r144 b168 b159 r153 b165 r159 b183 r159 r174 b171 r129 ' +
    'b174 b162 r186 b120 r198 b168 b171 r165 b162 r123 r153 r135 r120 r69 r78 r126 r114 r135 b99 r138 r120 b120 r156 b141 r168 b132 b135 r159 b150 b123 ' +
    'b174 r192 b180 b198 b177 b162 r201 r189 r168 b162 b195 b213 b216 b222 r243 b231 b243 r243 b246 r243 r240 r252 b243 r252 b246 b207 r243 b219 r240 b240 ' +
    'b228 r249 b237 r246 b252 r246 b255 b255 b252 r267 r261 b258 b252 r261 b258 b258 r261 r261 r261 b261 r273 b258 b243 b267 r267 r270 r264 r249 r252 b258 r252 r255').split(' ');
volume.forEach(function (v, i) {
    var y = Math.round(390 + v.slice(1) / 3);
    var x = Math.floor(barX(i)) - 2, next = Math.floor(barX(i + 1)) - 2;
    rect(x, y, next - x - 1, 500 - y, v[0] === 'r' ? '#a52a2a' : '#00008b');
});

// macd
line('63,556.5 937,556.5', '#000064');
line('64.5,552.7 80,552.7 90,548.3 123,548.3 140,548.7 148,547.3 163,547.7 173,539.3 180,533.3 188,524.3 195,519.3 200,520.3 211.7,516.3 223,521 237,524 245,525.7 251,528.3 258,526 290,527 295,528.3 300,537.3 305,542.7 312,541.7 318,544.3 337,544.3 340,543.3 350,545.3 367,544.7 377,549 400,550 408,556 417,558.3 427,564 437,568.3 448,567 463,561.7 473,556 487,549 507,542.7 517,537.7 527,536.3 540,537.3 560,539.3 577,544.7 590,555.3 602,565.3 613,561.7 623,561.7 635,567.3 643,573.7 653,577.3 662,588.3 673,592.7 680,589.3 693,582 707,580.3 717,582.3 723,587.3 740,595.7 755,590.7 773,593.7 790,600.7 797,598.3 807,599.3 817,596.3 827,599.3 835,599.3 840,596.3 853,595 860,598.3 869,603.3 880,597.3 893,583.3 902,578.3 914,566', '#f00');
line('64.5,550.7 68,551.3 83,551.3 110,549 145,549.3 167,548.3 180,542 197,532.7 210,526.7 217,524.3 237,523.7 267,526 295,526 303,530 320,536 333,540.3 353,542.3 377,545 397,547.3 420,553.3 443,561.7 463,563.3 473,561.7 487,556 507,550 530,542.3 553,539.3 573,541 593,547 607,554.7 633,560.7 657,571 678,582.3 717,582 730,584.3 743,589 780,592 793,595.7 810,597.3 860,596.7 875,599.7 888,597.3 902,590 914,582.3', '#2f8b8b');

// frames
rect(61, 177, 2, 431, '#8c8c8c');
rect(936, 177, 1, 431, '#8c8c8c');
rect(5, 392, 989, 1, '#808080');
rect(5, 393, 989, 1, '#c8c8c8');
rect(5, 500, 989, 1, '#808080');
rect(5, 501, 989, 1, '#c8c8c8');
rect(78, 178, 1, 431, '#f00');

// legends
[180, 395, 503].forEach(function (y) {
    rect(66, y + 2, 5, 9, '#aaa');
    out.push('<rect x="64.5" y="' + (y + .5) + '" width="4" height="8" fill="#b8f5b8" stroke="#205a4a"/>');
});
text(73, 190, '가격이동평균(종가,단순이평)', 157);
text(235, 190, '5', 7);
text(247, 190, '20', 12, '#f00');
text(263, 190, '60', 12, '#008000');
text(281, 190, '120', 18, '#f0f');
text(72, 405, '거래량', 36);
text(73, 513, 'MACD(종가,12,26,9,지수이평)', 163);
text(241, 513, 'MACD(12, 26)', 78, '#f00');
text(324, 513, 'Signal(지수이평, 9)', 107, '#2f8b8b');
text(819, 189, 'HC:371.58 (-30.22%)', 112, BLUE);
text(819, 201, 'LC:226.85 (+35.95%)', 112, RED);

// highs and lows
text(388, 199, '1,229.42(2026/04/27)', 113, RED);
line('502,194.5 514.5,194.5 514.5,198', RED);
out.push('<path d="M512 197h5l-2.500 3z" fill="' + RED + '"/>');
text(741, 390, '630.99(2026/07/29)', 104, BLUE);
line('846,386.5 865,386.5', BLUE);
out.push('<path d="M861 386h5l-2.500-3z" fill="' + BLUE + '"/>');
text(493, 411, '1,902,506(2026/04/16)', 118, '#a52a2a');
line('492,406.5 475.5,406.5 475.5,411', '#a52a2a');
out.push('<path d="M473 409h5l-2.500 3z" fill="#a52a2a"/>');
text(724, 429, '414,859(2026/07/27)', 110, '#00008b');
line('838,425.5 852,425.5', '#00008b', 'stroke-dasharray="3 3"');
line('852.5,394 852.5,500', '#00008b', 'stroke-dasharray="3 3"');

// value tags
out.push('<defs><linearGradient id="tagRed"><stop offset="0" stop-color="#e03010"/><stop offset="1" stop-color="#3c0803"/></linearGradient>' +
    '<linearGradient id="tagBlue"><stop offset="0" stop-color="#3a86ff"/><stop offset="1" stop-color="#0c1c40"/></linearGradient></defs>');
out.push('<path d="M938 313l6-20h50v39h-50z" fill="url(#tagRed)"/>');
out.push('<path d="M938 475l7-8h49v15h-49z" fill="url(#tagBlue)"/>');
out.push('<path d="M938 565l7-8h49v15h-49z" fill="url(#tagRed)"/>');
text(950, 305, '857.84', 34, '#fff');
text(948, 317, '+0.39%', 40, '#fff');
out.push('<path d="M952 329l5-9 5 9z" fill="#fff"/>');
text(962, 329, '3.37', 22, '#fff');
text(947, 479, '529,013', 41, '#fff');
text(950, 569, '-12.24', 34, '#fff');

// pane buttons
[178, 394, 502].forEach(function (y, n) {
    [946, 958, 970, 982].forEach(function (x) {
        rect(x, y, 11, 12, '#111');
        rect(x, y, 10, 11, '#f4f4f4');
    });
    line('948.5,' + (y + 2) + ' 948.5,' + (y + 8.5) + ' 954,' + (y + 8.5), '#000');
    rect(962, y + 2, 2, 7, '#000');
    line('972.5,' + (y + 3) + ' 978.5,' + (y + 3) + ' 978.5,' + (y + 8.5) + ' 972.5,' + (y + 8.5) + ' 972.5,' + (y + 2), '#000', 'stroke-width="1.4"');
    var c = n ? '#000' : '#999';
    line('984,' + (y + 2) + ' 990,' + (y + 9), c, 'stroke-width="1.4"');
    line('990,' + (y + 2) + ' 984,' + (y + 9), c, 'stroke-width="1.4"');
});

// date axis
rect(5, 608, 989, 20, '#000');
rect(6, 609, 988, 18, '#fff');
[67, 78, 84, 112, 140, 168, 197, 225, 253, 264, 292, 315, 343, 371, 399, 410, 427, 455, 483, 512, 534, 557, 585, 613, 635, 658, 686, 714, 742, 753, 770, 798, 821, 849, 877, 905, 917].forEach(function (x) {
    rect(x, 609, 1, 3, '#000');
});
text(6, 623, '2025/12/26', 60);
text(79, 623, '2026', 27, '#000', 'bold');
months.forEach(function (m) {
    text(m[1] + .5, 623, m[0], 12);
});
text(932, 623, '2026/08/11', 59);

svg.innerHTML = out.join('');
```
